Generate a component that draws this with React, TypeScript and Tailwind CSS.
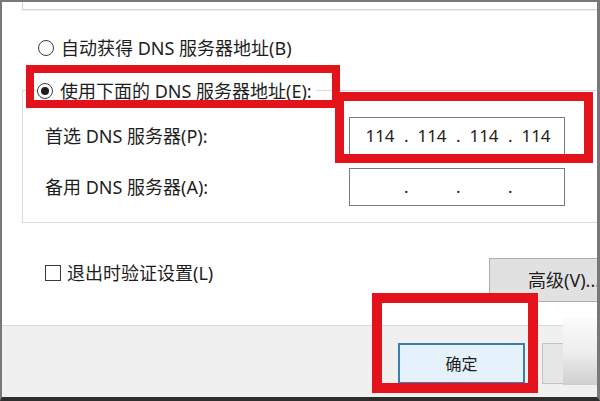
import React from 'react';

const font = "font-['Noto_Sans','Noto_Sans_CJK_SC',sans-serif]";

function Radio({ checked }: { checked?: boolean }) {
  return (
    <span className="flex h-[16px] w-[16px] shrink-0 items-center justify-center rounded-full border-[1.5px] border-[#3a3a3a] bg-white">
      {checked && <span className="h-[8px] w-[8px] rounded-full bg-[#1e1e1e]" />}
    </span>
  );
}

function IpInput({ parts }: { parts: string[] }) {
  return (
    <div className="flex h-[38px] w-[216px] items-center border border-[#7a7a7a] bg-white pl-[6px] text-[17px] text-[#222]">
      {parts.map((p, i) => (
        <React.Fragment key={i}>
          {i > 0 && <span className="w-[4px] text-center">.</span>}
          <span className="w-[48px] text-center">{p}</span>
        </React.Fragment>
      ))}
    </div>
  );
}

export default function App() {
  return (
    <div
      className={`relative flex h-[401px] w-[600px] flex-col overflow-hidden border-t-2 border-r-[3px] border-b-4 border-l-2 border-[#787878] border-b-[#2e2e2e] bg-white text-[18px] text-[#1e1e1e] ${font}`}
    >
      {/* previous group box, cut off at the top */}
      <div className="ml-[20px] h-[8px] border-b border-l border-[#d3d3d3]" />
      <div className="ml-[20px] h-px bg-[#efefef]" />

      <label className="mt-[27px] flex h-[20px] items-center gap-[7px] pl-[36px]">
        <Radio />
        <span>自动获得 DNS 服务器地址(B)</span>
      </label>

      {/* DNS group box */}
      <div className="mt-[32px] ml-[20px] border-t border-b border-l border-[#dadada] pb-[16px]">
        <label className="-mt-[10px] ml-[14px] flex h-[20px] w-fit items-center gap-[7px] bg-white pr-[4px]">
          <Radio checked />
          <span>使用下面的 DNS 服务器地址(E):</span>
        </label>

        <div className="mt-[16px] flex items-center pl-[22px]">
          <span className="w-[304px]">首选 DNS 服务器(P):</span>
          <IpInput parts={['114', '114', '114', '114']} />
        </div>

        <div className="mt-[13px] flex items-center pl-[22px]">
          <span className="w-[304px]">备用 DNS 服务器(A):</span>
          <IpInput parts={['', '', '', '']} />
        </div>
      </div>

      <div className="mt-[35px] flex items-start pl-[43px]">
        <label className="mt-[5px] flex h-[20px] items-center gap-[6px]">
          <span className="h-[16px] w-[16px] border-[1.5px] border-[#3a3a3a] bg-white" />
          <span>退出时验证设置(L)</span>
        </label>
        <button className="-mr-[20px] ml-auto flex h-[44px] w-[128px] items-center border border-[#adadad] bg-[#e1e1e1] pl-[38px]">
          高级(V)...
        </button>
      </div>

      {/* dialog footer */}
      <div className="mt-[23px] flex flex-1 justify-end gap-[17px] border-t border-[#dcdcdc] bg-[#f0f0f0] pt-[17px]">
        <button className="flex h-[41px] w-[127px] items-center justify-center border-2 border-[#3b7fae] bg-[#e5f1fb] text-[16px]">
          确定
        </button>
        <div className="-mr-[72px] h-[41px] w-[127px] border border-[#c4c4c4] bg-[#e6e6e6]" />
      </div>

      {/* blurred patch over the cancel button */}
      <div className="absolute top-[316px] left-[561px] h-[67px] w-[40px] bg-gradient-to-b from-[#fbfbfb] via-[#eeeeee] to-[#cfcfcf]" />

      {/* red annotation boxes */}
      <div className="absolute top-[63px] left-[24px] h-[43px] w-[314px] border-[8px] border-[#e3131b]" />
      <div className="absolute top-[90px] left-[333px] h-[71px] w-[258px] border-[9px] border-[#e3131b]" />
      <div className="absolute top-[291px] left-[370px] h-[100px] w-[166px] border-[10px] border-[#e3131b]" />
    </div>
  );
}
